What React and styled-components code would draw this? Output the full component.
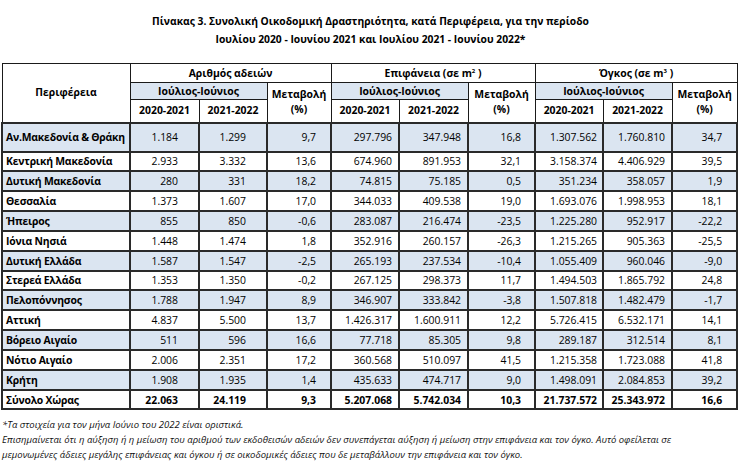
import React from "react";
import styled, { createGlobalStyle } from "styled-components";

const GlobalStyle = createGlobalStyle`
  html, body {
    margin: 0;
    padding: 0;
    background: #ffffff;
  }
  body {
    font-family: "Open Sans", "Noto Sans", sans-serif;
    color: #000;
  }
`;

const Page = styled.div`
  width: 740px;
  padding: 12px 0 0 1px;
  box-sizing: border-box;
`;

const Title = styled.h1`
  margin: 0 0 15px;
  font-size: 10.3px;
  line-height: 18px;
  font-weight: 700;
  text-align: center;
`;

const Table = styled.table`
  border-collapse: collapse;
  table-layout: fixed;
  width: 735px;
  font-size: 10.4px;
  border: 1px solid #000;
`;

const HeadRow = styled.tr`
  height: ${({ $h }) => $h}px;
`;

const Th = styled.th`
  border: 1px solid #1a1a1a;
  font-weight: 700;
  text-align: center;
  vertical-align: middle;
  padding: 0 2px;
  background: ${({ $shade }) => ($shade ? "#dbe5f1" : "#ffffff")};
  line-height: 15px;
  white-space: nowrap;

  sup {
    font-size: 6px;
    line-height: 0;
  }
`;

const BodyRow = styled.tr`
  height: ${({ $h }) => $h}px;
  background: ${({ $shade }) => ($shade ? "#dbe5f1" : "#ffffff")};
  font-weight: ${({ $total }) => ($total ? 700 : 400)};
`;

const Region = styled.td`
  border: 2px solid #2a2a2a;
  font-weight: 700;
  letter-spacing: -0.2px;
  padding: 0 0 0 3px;
  white-space: nowrap;
  overflow: hidden;
`;

const Num = styled.td`
  border: 2px solid #2a2a2a;
  text-align: right;
  padding: 0 ${({ $pad }) => $pad}px 0 0;
  white-space: nowrap;
`;

const Notes = styled.div`
  margin-top: 7px;
  font-size: 9.5px;
  font-style: italic;
  line-height: 15px;
  color: #111;
  padding-left: 1px;
`;

const widths = [128, 69, 68, 64, 68, 69, 67, 68, 69, 65];
const pads = [20, 20, 14, 6, 6, 13, 5, 6, 14];

const rows = [
  ["Αν.Μακεδονία & Θράκη", "1.184", "1.299", "9,7", "297.796", "347.948", "16,8", "1.307.562", "1.760.810", "34,7"],
  ["Κεντρική Μακεδονία", "2.933", "3.332", "13,6", "674.960", "891.953", "32,1", "3.158.374", "4.406.929", "39,5"],
  ["Δυτική Μακεδονία", "280", "331", "18,2", "74.815", "75.185", "0,5", "351.234", "358.057", "1,9"],
  ["Θεσσαλία", "1.373", "1.607", "17,0", "344.033", "409.538", "19,0", "1.693.076", "1.998.953", "18,1"],
  ["Ήπειρος", "855", "850", "-0,6", "283.087", "216.474", "-23,5", "1.225.280", "952.917", "-22,2"],
  ["Ιόνια Νησιά", "1.448", "1.474", "1,8", "352.916", "260.157", "-26,3", "1.215.265", "905.363", "-25,5"],
  ["Δυτική Ελλάδα", "1.587", "1.547", "-2,5", "265.193", "237.534", "-10,4", "1.055.409", "960.046", "-9,0"],
  ["Στερεά Ελλάδα", "1.353", "1.350", "-0,2", "267.125", "298.373", "11,7", "1.494.503", "1.865.792", "24,8"],
  ["Πελοπόννησος", "1.788", "1.947", "8,9", "346.907", "333.842", "-3,8", "1.507.818", "1.482.479", "-1,7"],
  ["Αττική", "4.837", "5.500", "13,7", "1.426.317", "1.600.911", "12,2", "5.726.415", "6.532.171", "14,1"],
  ["Βόρειο Αιγαίο", "511", "596", "16,6", "77.718", "85.305", "9,8", "289.187", "312.514", "8,1"],
  ["Νότιο Αιγαίο", "2.006", "2.351", "17,2", "360.568", "510.097", "41,5", "1.215.358", "1.723.088", "41,8"],
  ["Κρήτη", "1.908", "1.935", "1,4", "435.633", "474.717", "9,0", "1.498.091", "2.084.853", "39,2"],
];

const total = ["Σύνολο Χώρας", "22.063", "24.119", "9,3", "5.207.068", "5.742.034", "10,3", "21.737.572", "25.343.972", "16,6"];

function DataRow({ cells, shade, total, height }) {
  return (
    <BodyRow $shade={shade} $total={total} $h={height}>
      <Region>{cells[0]}</Region>
      {cells.slice(1).map((c, i) => (
        <Num key={i} $pad={pads[i]}>
          {c}
        </Num>
      ))}
    </BodyRow>
  );
}

export default function App() {
  return (
    <Page>
      <GlobalStyle />
      <Title>
        Πίνακας 3. Συνολική Οικοδομική Δραστηριότητα, κατά Περιφέρεια, για την περίοδο
        <br />
        Ιουλίου 2020 - Ιουνίου 2021 και Ιουλίου 2021 - Ιουνίου 2022*
      </Title>

      <Table>
        <colgroup>
          {widths.map((w, i) => (
            <col key={i} style={{ width: w }} />
          ))}
        </colgroup>
        <thead>
          <HeadRow $h={19}>
            <Th rowSpan={3}>Περιφέρεια</Th>
            <Th colSpan={3}>Αριθμός αδειών</Th>
            <Th colSpan={3}>
              Επιφάνεια (σε m<sup>2</sup> )
            </Th>
            <Th colSpan={3}>
              Όγκος (σε m<sup>3</sup> )
            </Th>
          </HeadRow>
          <HeadRow $h={17}>
            <Th colSpan={2} $shade>Ιούλιος-Ιούνιος</Th>
            <Th rowSpan={2}>
              Μεταβολή
              <br />
              (%)
            </Th>
            <Th colSpan={2} $shade>Ιούλιος-Ιούνιος</Th>
            <Th rowSpan={2}>
              Μεταβολή
              <br />
              (%)
            </Th>
            <Th colSpan={2} $shade>Ιούλιος-Ιούνιος</Th>
            <Th rowSpan={2}>
              Μεταβολή
              <br />
              (%)
            </Th>
          </HeadRow>
          <HeadRow $h={23}>
            <Th>2020-2021</Th>
            <Th>2021-2022</Th>
            <Th>2020-2021</Th>
            <Th>2021-2022</Th>
            <Th>2020-2021</Th>
            <Th>2021-2022</Th>
          </HeadRow>
        </thead>
        <tbody>
          {rows.map((r, i) => (
            <DataRow key={r[0]} cells={r} shade={i % 2 === 0} height={i === 0 ? 29 : 19.85} />
          ))}
          <DataRow cells={total} total height={19.85} />
        </tbody>
      </Table>

      <Notes>
        *Τα στοιχεία για τον μήνα Ιούνιο του 2022 είναι οριστικά.
        <br />
        Επισημαίνεται ότι η αύξηση ή η μείωση του αριθμού των εκδοθεισών αδειών δεν συνεπάγεται αύξηση ή μείωση στην επιφάνεια και τον όγκο. Αυτό οφείλεται σε
        <br />
        μεμονωμένες άδειες μεγάλης επιφάνειας και όγκου ή σε οικοδομικές άδειες που δε μεταβάλλουν την επιφάνεια και τον όγκο.
      </Notes>
    </Page>
  );
}
